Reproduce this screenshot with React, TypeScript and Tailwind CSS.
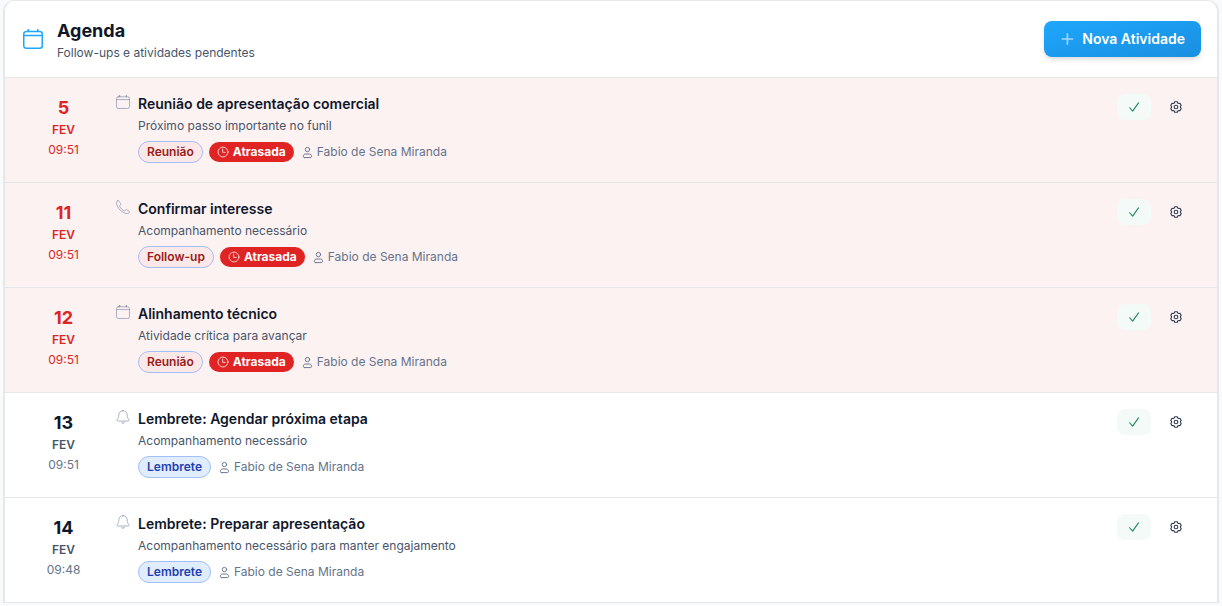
import type { ReactNode } from "react";

type Kind = "meeting" | "call" | "reminder";

interface Activity {
  day: number;
  month: string;
  time: string;
  kind: Kind;
  title: string;
  detail: string;
  tag: string;
  late: boolean;
  owner: string;
}

const activities: Activity[] = [
  { day: 5, month: "FEV", time: "09:51", kind: "meeting", title: "Reunião de apresentação comercial", detail: "Próximo passo importante no funil", tag: "Reunião", late: true, owner: "Fabio de Sena Miranda" },
  { day: 11, month: "FEV", time: "09:51", kind: "call", title: "Confirmar interesse", detail: "Acompanhamento necessário", tag: "Follow-up", late: true, owner: "Fabio de Sena Miranda" },
  { day: 12, month: "FEV", time: "09:51", kind: "meeting", title: "Alinhamento técnico", detail: "Atividade crítica para avançar", tag: "Reunião", late: true, owner: "Fabio de Sena Miranda" },
  { day: 13, month: "FEV", time: "09:51", kind: "reminder", title: "Lembrete: Agendar próxima etapa", detail: "Acompanhamento necessário", tag: "Lembrete", late: false, owner: "Fabio de Sena Miranda" },
  { day: 14, month: "FEV", time: "09:48", kind: "reminder", title: "Lembrete: Preparar apresentação", detail: "Acompanhamento necessário para manter engajamento", tag: "Lembrete", late: false, owner: "Fabio de Sena Miranda" },
];

function Icon({ className, width = 1, children }: { className: string; width?: number; children: ReactNode }) {
  return (
    <svg viewBox="0 0 16 16" fill="none" stroke="currentColor" strokeWidth={width} strokeLinecap="round" strokeLinejoin="round" className={`shrink-0 ${className}`} aria-hidden="true">
      {children}
    </svg>
  );
}

function CalendarIcon({ className, width }: { className: string; width: number }) {
  return (
    <Icon className={className} width={width}>
      <rect x="0.6" y="2" width="14.8" height="13.4" rx="2" />
      <path d="M.6 5.200h14.800" />
      <path d="M4.200.6v1.400M11.800.6v1.400" strokeWidth="1.3" />
    </Icon>
  );
}

function PhoneIcon({ className }: { className: string }) {
  return (
    <Icon className={className} width={0.8}>
      <path d="M1.500.9C.3 2 .3 4.500 1.700 7.400c1.500 3.100 3.900 5.400 6.900 6.900 2.900 1.500 5.400 1.400 6.500.200.600-.600.500-1.200-.100-1.600l-2.500-1.700c-.600-.400-1.100-.300-1.600.100l-.900.900c-.400.300-.8.300-1.200.100C7.200 11.300 5.300 9.400 4.300 7.700c-.200-.400-.200-.8.100-1.200l.8-.900c.4-.400.4-1 .100-1.500L3.400 1.100c-.4-.6-1.200-.8-1.900-.2z" />
    </Icon>
  );
}

function BellIcon({ className }: { className: string }) {
  return (
    <Icon className={className} width={0.8}>
      <path d="M8 .8C5.200.8 3.200 2.800 3.200 5.600c0 2.700-.6 3.600-1.600 4.800-.9 1.100-.5 2.200.8 2.200h11.200c1.300 0 1.700-1.100.8-2.200-1-1.200-1.600-2.100-1.600-4.800C12.800 2.800 10.800.8 8 .8z" />
      <path d="M6.600 14.600c1.100 1.200 2.300.5 2.900-.8" strokeWidth="1.100" />
    </Icon>
  );
}

function ClockIcon({ className }: { className: string }) {
  return (
    <Icon className={className} width={1}>
      <circle cx="8" cy="8" r="6.600" />
      <path d="M7.500 4v4.500H11" />
    </Icon>
  );
}

function PersonIcon({ className }: { className: string }) {
  return (
    <Icon className={className} width={1.1}>
      <circle cx="8.500" cy="5.200" r="2.500" />
      <path d="M5.400 14.400h6.200c1.200 0 1.800-.7 1.600-1.700-.2-1.600-1.200-2.400-2.600-2.400H6.400c-1.400 0-2.400.8-2.600 2.400-.2 1 .4 1.700 1.600 1.700z" />
    </Icon>
  );
}

function GearIcon({ className }: { className: string }) {
  return (
    <Icon className={className} width={1.5}>
      <path d="M6.300 1h3.400l.5 1.600 1.500.8 1.800-.2 1.500 2.800-1 1.200v1.600l1 1.200-1.500 2.800-1.800-.2-1.500.8-.5 1.600H6.300l-.5-1.600-1.500-.8-1.800.2L1 10l1-1.200V7.200L1 6l1.500-2.800 1.800.2 1.500-.8z" />
      <circle cx="8" cy="8" r="2.400" />
    </Icon>
  );
}

function KindIcon({ kind }: { kind: Kind }) {
  const className = "size-3.5 text-[#8794aa]";
  if (kind === "meeting") return <CalendarIcon className={className} width={0.8} />;
  if (kind === "call") return <PhoneIcon className={className} />;
  return <BellIcon className={className} />;
}

function ActivityRow({ item }: { item: Activity }) {
  return (
    <li className={`flex items-start border-b border-[#e5e7eb] py-4 pr-6 pl-4 ${item.late ? "bg-[#fdf2f2]" : "bg-white"}`}>
      <div className={`flex w-[85px] shrink-0 flex-col items-center pt-1 ${item.late ? "text-[#dc2626]" : "text-[#64748b]"}`}>
        <span className={`text-lg leading-5 font-bold ${item.late ? "" : "text-[#0f172a]"}`}>{item.day}</span>
        <span className={`mt-1 text-xs leading-4 font-semibold ${item.late ? "" : "text-[#475569]"}`}>{item.month}</span>
        <span className="mt-1 text-xs leading-4">{item.time}</span>
      </div>
      <div className="ml-2.5 flex min-w-0 flex-1 gap-2">
        <div className="pt-px">
          <KindIcon kind={item.kind} />
        </div>
        <div className="min-w-0 pb-[3px]">
          <h2 className="text-sm leading-5 font-semibold text-[#0f172a]">{item.title}</h2>
          <p className="mt-0.5 text-xs leading-5 text-[#475569]">{item.detail}</p>
          <div className="mt-[5px] flex items-center gap-1.5">
            <span className={`rounded-full border border-[#a3bffa] px-2 text-xs leading-5 font-semibold ${item.late ? "bg-[#fde8e8] text-[#991b1b]" : "bg-[#e0edff] text-[#1e40af]"}`}>{item.tag}</span>
            {item.late && (
              <span className="flex items-center gap-1 rounded-full bg-[#e02424] px-2 text-xs leading-5 font-bold text-white">
                <ClockIcon className="size-3" />
                Atrasada
              </span>
            )}
            <span className="flex items-center gap-[3px] text-xs leading-5 text-[#64748b]">
              <PersonIcon className="size-3.5" />
              {item.owner}
            </span>
          </div>
        </div>
      </div>
      <div className="flex gap-2">
        <button type="button" aria-label={`Concluir ${item.title}`} className="flex h-[26px] w-[34px] items-center justify-center rounded-lg bg-[#f3faf8] text-[#198754]">
          <Icon className="size-3" width={1.4}>
            <path d="M2.200 9l4 4.500L14 2.500" />
          </Icon>
        </button>
        <button type="button" aria-label={`Opções de ${item.title}`} className="flex h-[26px] w-[34px] items-center justify-center text-[#334155]">
          <GearIcon className="size-3" />
        </button>
      </div>
    </li>
  );
}

export default function App() {
  return (
    <main className="min-h-screen bg-[#f8fafc] px-[3px] font-['Inter',sans-serif]">
      <section className="overflow-hidden rounded-t-xl border-x-2 border-t border-[#e5e7eb] bg-white">
        <header className="flex items-center justify-between border-b border-[#e5e7eb] bg-white px-4 py-[15px]">
          <div className="flex items-center gap-3">
            <div className="flex w-6 justify-center">
              <CalendarIcon className="size-5 text-[#1ea7fd]" width={1.2} />
            </div>
            <div className="pt-0.5">
              <h1 className="text-lg leading-[26px] font-bold text-[#0f172a]">Agenda</h1>
              <p className="text-xs leading-[18px] text-[#475569]">Follow-ups e atividades pendentes</p>
            </div>
          </div>
          <button type="button" className="flex h-9 items-center gap-2 rounded-lg bg-linear-to-br from-[#1ea7fd] to-[#1a8fe0] px-4 text-sm font-semibold text-white shadow-md">
            <Icon className="size-3.5 opacity-60" width={1.8}>
              <path d="M8.500 2v12M2.500 8h12" />
            </Icon>
            Nova Atividade
          </button>
        </header>
        <ul>
          {activities.map((item) => (
            <ActivityRow key={item.day} item={item} />
          ))}
        </ul>
      </section>
    </main>
  );
}
